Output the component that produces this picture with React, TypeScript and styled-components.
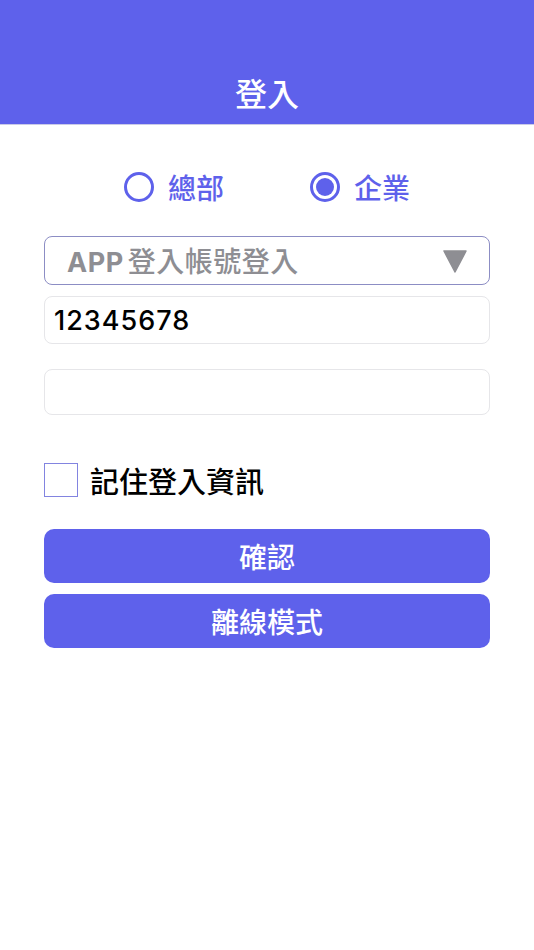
import React, { useState } from 'react';
import styled, { createGlobalStyle } from 'styled-components';

const PRIMARY = '#5e61eb';

const GlobalStyle = createGlobalStyle`
  html, body {
    margin: 0;
    padding: 0;
    background: #ffffff;
  }
  body {
    font-family: "Noto Sans CJK TC", "Noto Sans", sans-serif;
  }
  * {
    box-sizing: border-box;
  }
`;

const Page = styled.div`
  width: 534px;
  min-height: 950px;
  background: #ffffff;
`;

const Header = styled.header`
  height: 125px;
  background: ${PRIMARY};
  display: flex;
  align-items: flex-end;
  justify-content: center;
  padding-bottom: 10px;
  border-bottom: 1px solid #c9cae8;
`;

const Title = styled.h1`
  margin: 0;
  color: #ffffff;
  font-size: 32px;
  font-weight: 500;
  line-height: 44px;
`;

const Form = styled.div`
  display: flex;
  flex-direction: column;
  padding: 0 44px;
`;

const RadioRow = styled.div`
  margin-top: 42px;
  height: 40px;
  display: flex;
  justify-content: center;
  align-items: center;
  gap: 86px;
`;

const RadioItem = styled.label`
  display: flex;
  align-items: center;
  gap: 14px;
  cursor: pointer;
  color: ${PRIMARY};
  font-size: 28px;
  font-weight: 500;
  line-height: 40px;
`;

const RadioCircle = styled.span<{ $checked: boolean }>`
  width: 30px;
  height: 30px;
  border-radius: 50%;
  border: 3px solid ${PRIMARY};
  display: flex;
  align-items: center;
  justify-content: center;

  &::after {
    content: '';
    width: 18px;
    height: 18px;
    border-radius: 50%;
    background: ${PRIMARY};
    display: ${(p) => (p.$checked ? 'block' : 'none')};
  }
`;

const Select = styled.div`
  margin-top: 29px;
  height: 49px;
  border: 1.5px solid #8c8dc4;
  border-radius: 8px;
  display: flex;
  align-items: center;
  justify-content: space-between;
  padding: 0 22px;
  color: #8e8e93;
  font-size: 28px;
  font-weight: 500;
`;

const SelectText = styled.span`
  line-height: 1;
  letter-spacing: 0.5px;
`;

const Latin = styled.span`
  font-family: Inter, "Liberation Sans", sans-serif;
  font-weight: 700;
  font-size: 27px;
  letter-spacing: 0.5px;
  margin-right: 4px;
`;

const Input = styled.input<{ $gap: number; $height: number }>`
  margin-top: ${(p) => p.$gap}px;
  height: ${(p) => p.$height}px;
  width: 100%;
  border: 1px solid #e6e6e9;
  border-radius: 8px;
  padding: 0 9px;
  font-family: Inter, "Liberation Sans", sans-serif;
  font-size: 27px;
  font-weight: 500;
  letter-spacing: 1px;
  color: #000000;
  outline: none;
  background: #ffffff;
`;

const CheckRow = styled.label`
  margin-top: 48px;
  display: flex;
  align-items: center;
  gap: 12px;
  cursor: pointer;
`;

const CheckBox = styled.span`
  width: 34px;
  height: 34px;
  border: 1.5px solid #8284e0;
  background: #ffffff;
`;

const CheckLabel = styled.span`
  font-size: 29px;
  font-weight: 500;
  color: #000000;
  line-height: 34px;
`;

const Button = styled.button<{ $gap: number }>`
  margin-top: ${(p) => p.$gap}px;
  height: 54px;
  width: 100%;
  border: none;
  border-radius: 10px;
  background: ${PRIMARY};
  color: #ffffff;
  font-family: "Noto Sans CJK TC", "Noto Sans", sans-serif;
  font-size: 28px;
  font-weight: 500;
  cursor: pointer;
`;

function Triangle() {
  return (
    <svg width="24" height="24" viewBox="0 0 24 24">
      <path d="M1 2 H23 L12 23 Z" fill="#8e8e93" stroke="#8e8e93" strokeWidth="1.5" strokeLinejoin="round" />
    </svg>
  );
}

export default function App() {
  const [type, setType] = useState<'hq' | 'ent'>('ent');

  return (
    <Page>
      <GlobalStyle />
      <Header>
        <Title>登入</Title>
      </Header>
      <Form>
        <RadioRow>
          <RadioItem onClick={() => setType('hq')}>
            <RadioCircle $checked={type === 'hq'} />
            總部
          </RadioItem>
          <RadioItem onClick={() => setType('ent')}>
            <RadioCircle $checked={type === 'ent'} />
            企業
          </RadioItem>
        </RadioRow>
        <Select>
          <SelectText>
            <Latin>APP</Latin>登入帳號登入
          </SelectText>
          <Triangle />
        </Select>
        <Input $gap={11} $height={48} defaultValue="12345678" />
        <Input $gap={25} $height={46} type="password" />
        <CheckRow>
          <CheckBox />
          <CheckLabel>記住登入資訊</CheckLabel>
        </CheckRow>
        <Button $gap={32}>確認</Button>
        <Button $gap={11}>離線模式</Button>
      </Form>
    </Page>
  );
}
